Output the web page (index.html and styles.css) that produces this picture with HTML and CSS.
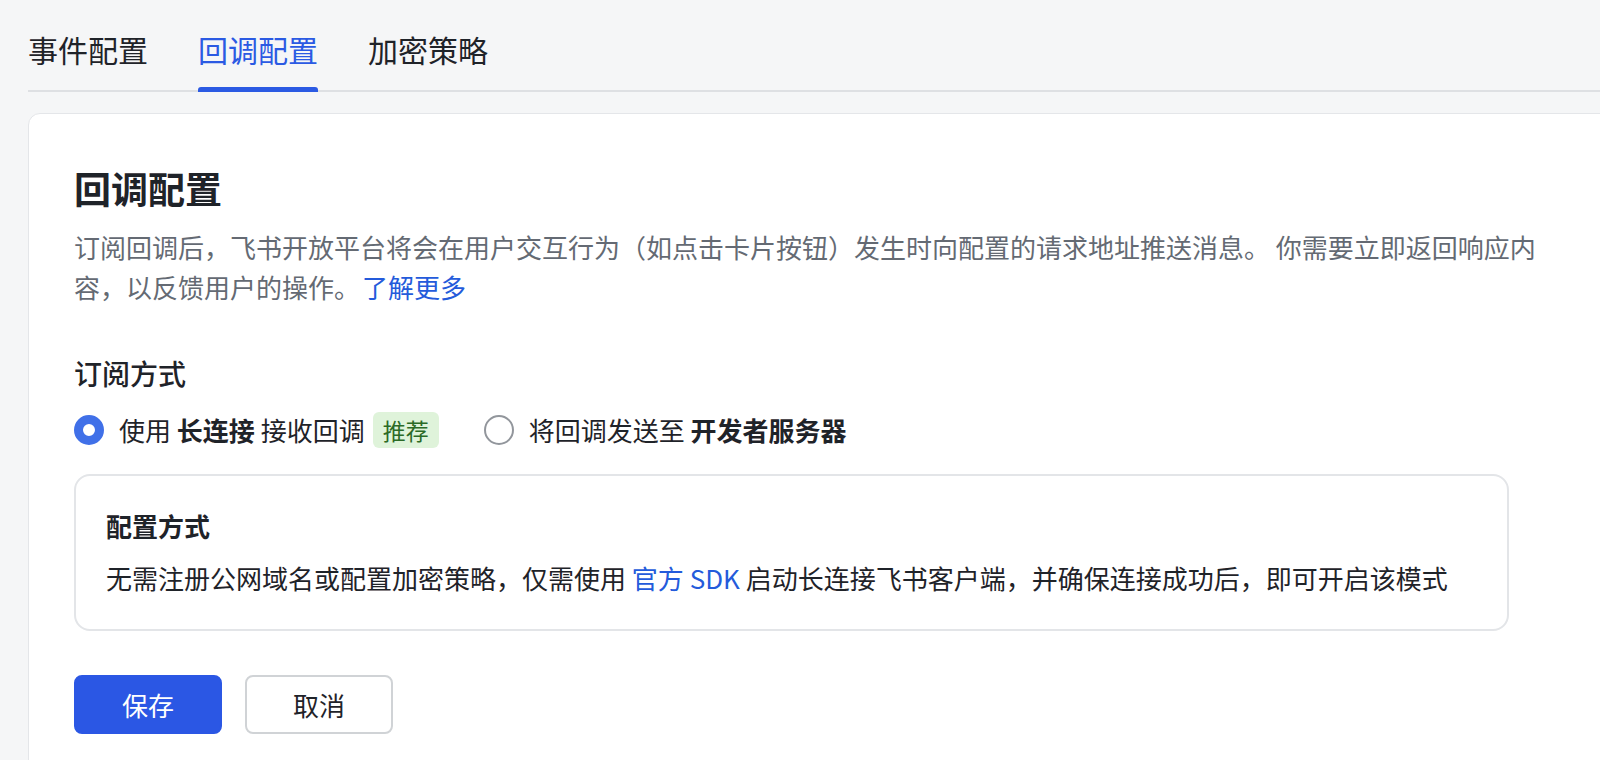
FILE: index.html
```html
<!DOCTYPE html>
<html>
<head>
    <meta charset="utf-8">
    <title>回调配置</title>
    <link rel="stylesheet" href="styles.css">
</head>
<body>

<div class="page">

    <div class="tabs">
        <div class="tab">事件配置</div>
        <div class="tab active">回调配置</div>
        <div class="tab">加密策略</div>
    </div>

    <div class="card">
        <div class="card-body">
            <div class="title">回调配置</div>
            <p class="desc">订阅回调后，飞书开放平台将会在用户交互行为（如点击卡片按钮）发生时向配置的请求地址推送消息。 你需要立即返回响应内容，以反馈用户的操作。<a class="link more" href="#">了解更多</a></p>

            <div class="section-title">订阅方式</div>
            <div class="options">
                <label class="option">
                    <span class="radio checked"></span>
                    <span class="option-text">使用 <b>长连接</b> 接收回调</span>
                    <span class="tag">推荐</span>
                </label>
                <label class="option">
                    <span class="radio"></span>
                    <span class="option-text">将回调发送至 <b>开发者服务器</b></span>
                </label>
            </div>

            <div class="panel">
                <div class="panel-title">配置方式</div>
                <div class="panel-text">无需注册公网域名或配置加密策略，仅需使用 <a class="link" href="#">官方 SDK</a> 启动长连接飞书客户端，并确保连接成功后，即可开启该模式</div>
            </div>

            <div class="actions">
                <button class="btn btn-primary">保存</button>
                <button class="btn">取消</button>
            </div>
        </div>
    </div>

</div>

</body>
</html>
```

FILE: styles.css
```css
body {
    font-family: "Noto Sans CJK SC", "Noto Sans", sans-serif;
    background-color: #f5f6f7;
    color: #1f2329;
    margin: 0;
    padding: 0;
    overflow: hidden;
}

.page {
    padding-left: 28px;
}

/* tab bar */
.tabs {
    display: flex;
    gap: 50px;
    border-bottom: 2px solid #dee0e3;
}

.tab {
    position: relative;
    font-size: 30px;
    line-height: 42px;
    padding: 28px 0 20px;
    color: #1f2329;
}

.tab.active {
    color: #2b5ae3;
}

.tab.active::after {
    content: "";
    position: absolute;
    left: 0;
    right: 0;
    bottom: -2px;
    height: 5px;
    background-color: #2b5ae3;
    border-radius: 3px 3px 0 0;
}

/* main card */
.card {
    margin-top: 21px;
    margin-right: -24px;
    min-height: 700px;
    background-color: #fff;
    border: 1px solid #e4e6e9;
    border-radius: 12px;
    padding: 50px 0 0 45px;
}

.card-body {
    width: 1470px;
}

.title {
    font-size: 37px;
    line-height: 48px;
    font-weight: 600;
}

.desc {
    font-size: 26px;
    line-height: 40px;
    color: #646a73;
    margin: 15px 0 0;
}

.link {
    color: #245bdb;
    text-decoration: none;
}

.more {
    margin-left: 2px;
}

.section-title {
    font-size: 28px;
    line-height: 40px;
    font-weight: 500;
    margin-top: 46px;
}

/* radio options */
.options {
    display: flex;
    align-items: center;
    gap: 45px;
    margin-top: 15px;
    height: 44px;
}

.option {
    display: flex;
    align-items: center;
    font-size: 26px;
    line-height: 40px;
}

.option b {
    font-weight: 600;
}

.radio {
    box-sizing: border-box;
    width: 30px;
    height: 30px;
    border-radius: 50%;
    border: 2px solid #92969c;
    margin-right: 15px;
    flex-shrink: 0;
}

.radio.checked {
    border: 9px solid #4070e8;
    background-color: #fff;
}

.tag {
    margin-left: 8px;
    height: 36px;
    line-height: 36px;
    padding: 0 10px;
    font-size: 23px;
    border-radius: 6px;
    background-color: #dff3da;
    color: #2b6a26;
}

/* info panel */
.panel {
    width: 1435px;
    box-sizing: border-box;
    margin-top: 22px;
    border: 2px solid #e3e5e8;
    border-radius: 16px;
    padding: 30px 28px 31px 30px;
}

.panel-title {
    font-size: 26px;
    line-height: 40px;
    font-weight: 600;
}

.panel-text {
    font-size: 26px;
    line-height: 40px;
    margin-top: 12px;
}

/* buttons */
.actions {
    display: flex;
    gap: 23px;
    margin-top: 44px;
}

.btn {
    width: 148px;
    height: 59px;
    font-family: inherit;
    font-size: 26px;
    color: #1f2329;
    background-color: #fff;
    border: 2px solid #d0d3d6;
    border-radius: 8px;
}

.btn-primary {
    color: #fff;
    background-color: #2b57e4;
    border-color: #2b57e4;
}
```
